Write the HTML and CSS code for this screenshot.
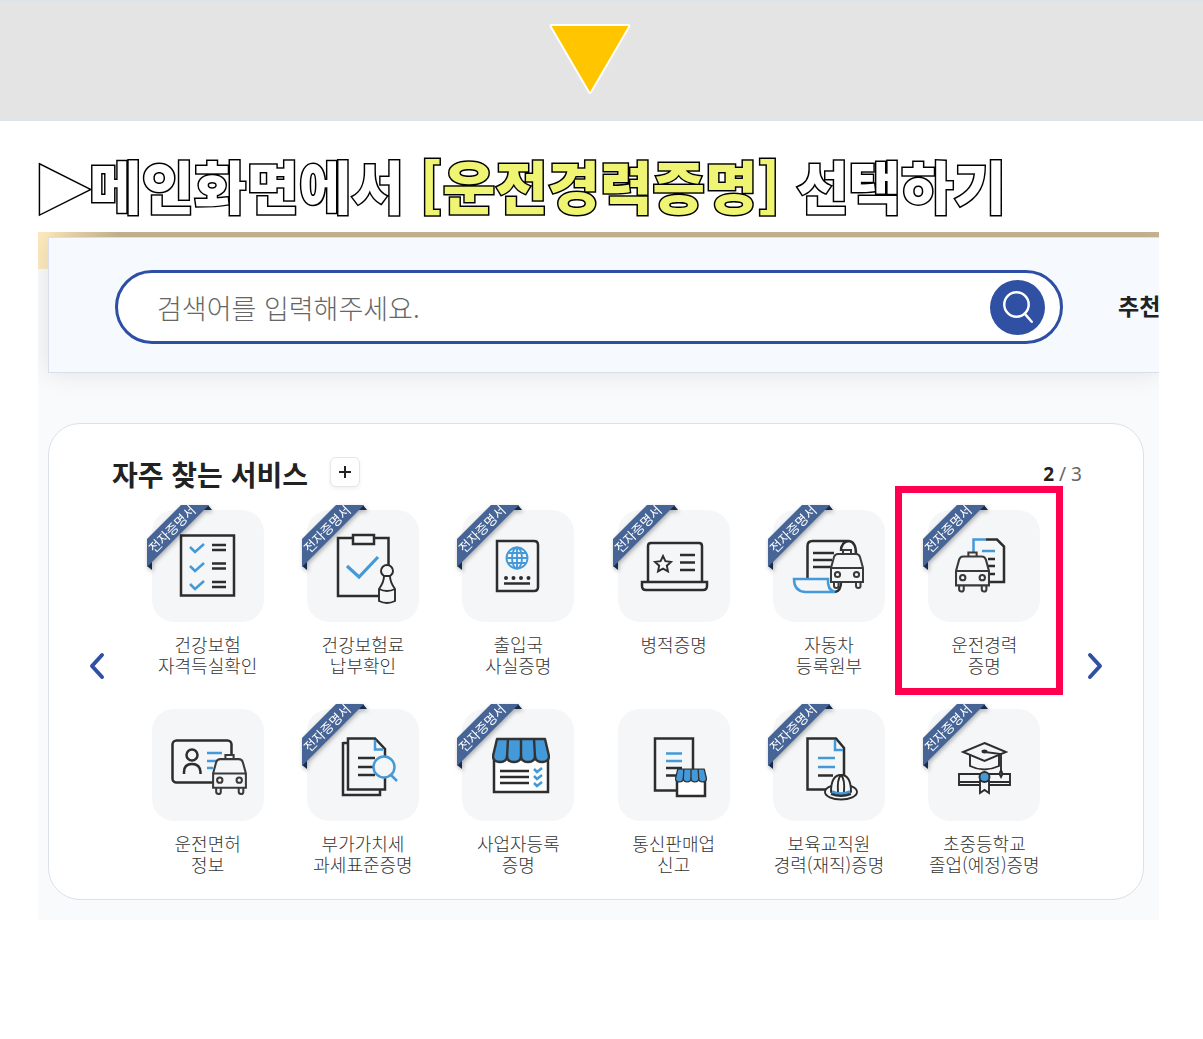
FILE: index.html
```html
<!DOCTYPE html>
<html lang="ko">
<head>
  <meta charset="UTF-8" />
  <meta name="viewport" content="width=device-width, initial-scale=1.0"/>
  <title>운전경력증명 선택하기</title>
  <link rel="stylesheet" href="styles.css">
</head>
<body>
  <!-- shared shapes -->
  <svg class="defs" aria-hidden="true">
    <symbol id="ribbon" viewBox="0 0 65 65">
      <path d="M58 0h3l4 5h-8zM0 58v3l5 4v-8z" fill="#172b4d"/>
      <path d="M34 0h28L0 62V34z" fill="#466596"/>
      <text class="ribbon-text" x="25" y="29" transform="rotate(-45 25 24)">전자증명서</text>
    </symbol>
    <symbol id="van" viewBox="0 0 34 40">
      <g fill="#f4f6f8" stroke="#3a3a3a" stroke-width="2">
        <path d="M4 32h4.500v5q0 2-2.200 2t-2.300-2zM26 32h4.500v5q0 2-2.200 2t-2.300-2z"/>
        <path d="M13 5V1h8v4"/>
        <path d="M1 33V19L4 8q1-3 4-3h18q3 0 4 3l3 11v14z"/>
        <path d="M1 19h32"/>
        <circle cx="7.500" cy="25.500" r="2.600"/>
        <circle cx="26.500" cy="25.500" r="2.600"/>
      </g>
    </symbol>
    <symbol id="awning" viewBox="0 0 58 27">
      <path d="M5 2h48l4 17q0 6-7 6t-7-6q0 6-7 6t-7-6q0 6-7 6t-7-6q0 6-7 6t-7-6z" fill="#4499d9" stroke="#333" stroke-width="2.400" stroke-linejoin="round"/>
      <path d="M16 2l-1 18M29 2v18M42 2l1 18" stroke="#333" stroke-width="2.400"/>
    </symbol>
  </svg>

  <div class="top-band">
    <svg class="down-arrow" viewBox="0 0 84 74" aria-hidden="true">
      <path d="M3 3h78L42 70z" fill="#ffc600" stroke="#fff" stroke-width="4" stroke-linejoin="round" paint-order="stroke"/>
    </svg>
  </div>

  <h1 class="step-title"><span class="marker">▶</span>메인화면에서 <em>[운전경력증명]</em> 선택하기</h1>

  <main class="portal">
    <div class="search-panel">
      <form class="search-box">
        <input type="search" class="search-input" placeholder="검색어를 입력해주세요." aria-label="검색어">
        <button type="button" class="search-btn" aria-label="검색">
          <svg viewBox="0 0 54 54" fill="none" stroke="#fff" stroke-width="2.400" stroke-linecap="round">
            <circle cx="26" cy="24" r="12"/>
            <path d="M34 33l7 8"/>
          </svg>
        </button>
      </form>
      <strong class="recommend">추천</strong>
    </div>

    <section class="services">
      <div class="services-head">
        <h2>자주 찾는 서비스</h2>
        <button type="button" class="plus-btn" aria-label="더보기">
          <svg viewBox="0 0 28 28"><path d="M14 8v12M8 14h12" stroke="#222" stroke-width="2"/></svg>
        </button>
        <p class="page-count"><b>2</b> / 3</p>
      </div>

      <div class="slider">
        <button type="button" class="arrow" aria-label="이전">
          <svg viewBox="0 0 16 28"><path d="M13 3L3 14l10 11"/></svg>
        </button>

        <ul class="service-list">
          <li>
            <a href="#" class="service">
              <span class="tile">
                <svg class="icon" viewBox="0 0 112 112">
                  <path d="M29 25.500h53v60H29z"/>
                  <path class="blue" d="M38 37l5 5 9-8M38 56l5 5 9-8M38 74l5 5 9-8"/>
                  <path d="M60 35h14M60 40h14M60 53.500h14M60 58.500h14M60 72h14M60 77h14"/>
                </svg>
                <svg class="ribbon"><use href="#ribbon"/></svg>
              </span>
              <span class="label">건강보험<br>자격득실확인</span>
            </a>
          </li>
          <li>
            <a href="#" class="service">
              <span class="tile">
                <svg class="icon" viewBox="0 0 112 112">
                  <path d="M31 28h50.500v58H31z"/>
                  <path class="fill" d="M46 25h21v9H46z"/>
                  <path class="blue thick" d="M40 56l12 11 19-20"/>
                  <path class="fill thin" d="M77 66q-3-2-3-5a6 6 0 0 1 12 0q0 3-3 5 0 6 5 13v12q-8 4-16 0V79q5-7 5-13z"/>
                  <path class="thin" d="M72 79q8 4 16 0M77 66h6"/>
                </svg>
                <svg class="ribbon"><use href="#ribbon"/></svg>
              </span>
              <span class="label">건강보험료<br>납부확인</span>
            </a>
          </li>
          <li>
            <a href="#" class="service">
              <span class="tile">
                <svg class="icon" viewBox="0 0 112 112">
                  <path d="M35 31h37q4 0 4 4v42q0 4-4 4H35z"/>
                  <g class="blue thin">
                    <circle cx="55" cy="48" r="10.500"/>
                    <ellipse cx="55" cy="48" rx="5" ry="10.500"/>
                    <path d="M55 37v22M44 48h22M46 43h18M46 53h18"/>
                  </g>
                  <path class="dots" d="M44 68h0M51.500 68h0M59 68h0M66.500 68h0"/>
                  <path d="M42 73.500h26"/>
                </svg>
                <svg class="ribbon"><use href="#ribbon"/></svg>
              </span>
              <span class="label">출입국<br>사실증명</span>
            </a>
          </li>
          <li>
            <a href="#" class="service">
              <span class="tile">
                <svg class="icon" viewBox="0 0 112 112">
                  <path d="M30 72V36q0-3 3-3h48q3 0 3 3v36"/>
                  <path d="M24 72h65v4q0 4-4 4H28q-4 0-4-4z"/>
                  <path class="thin" d="M45 46l2.400 5.200 5.600.700-4.200 3.800 1.200 5.700-5-2.800-5 2.800 1.200-5.700-4.200-3.800 5.600-.700z"/>
                  <path d="M62 45h15M62 52.500h15M62 60h15"/>
                </svg>
                <svg class="ribbon"><use href="#ribbon"/></svg>
              </span>
              <span class="label">병적증명</span>
            </a>
          </li>
          <li>
            <a href="#" class="service">
              <span class="tile">
                <svg class="icon" viewBox="0 0 112 112">
                  <path d="M34.500 69V36q0-5 5-5H76q-8 1-8 10M76 31q7 1 7 13"/>
                  <path d="M40 43h21M40 50h19M40 57h18"/>
                  <path d="M68 72q0 9-6 10"/>
                  <path class="blue" d="M62 82H32q-11-1-11-13h34q-1 11 7 13z"/>
                  <use href="#van" x="57" y="39" width="34" height="40"/>
                </svg>
                <svg class="ribbon"><use href="#ribbon"/></svg>
              </span>
              <span class="label">자동차<br>등록원부</span>
            </a>
          </li>
          <li>
            <a href="#" class="service selected">
              <span class="tile">
                <svg class="icon" viewBox="0 0 112 112">
                  <path class="blue" d="M45.500 42V29.500H58M54 41h13"/>
                  <path d="M58 29.500h11l7 7V72H60M60 49h7M60 56h7M60 64h7"/>
                  <use href="#van" x="27" y="41" width="35" height="42"/>
                </svg>
                <svg class="ribbon"><use href="#ribbon"/></svg>
              </span>
              <span class="label">운전경력<br>증명</span>
            </a>
          </li>
          <li>
            <a href="#" class="service">
              <span class="tile">
                <svg class="icon" viewBox="0 0 112 112">
                  <rect x="20.500" y="31.500" width="59" height="42" rx="4"/>
                  <circle cx="40" cy="46" r="5.500"/>
                  <path d="M32 65v-2q0-8 8-8t8.500 8v2"/>
                  <path class="blue" d="M55 44h15M55 52h9M55 59h6"/>
                  <use href="#van" x="60" y="45" width="35" height="41"/>
                </svg>
              </span>
              <span class="label">운전면허<br>정보</span>
            </a>
          </li>
          <li>
            <a href="#" class="service">
              <span class="tile">
                <svg class="icon" viewBox="0 0 112 112">
                  <path d="M36 34h5M36 33v53h37v-5"/>
                  <path d="M68 29.500H41V80.500h37V40z"/>
                  <path class="blue" d="M68 31v9.500h8"/>
                  <path d="M51 49h17M51 58h15M51 66h17"/>
                  <circle class="blue fill" cx="77" cy="58" r="10.500"/>
                  <path class="blue" d="M84 66l6 6"/>
                </svg>
                <svg class="ribbon"><use href="#ribbon"/></svg>
              </span>
              <span class="label">부가가치세<br>과세표준증명</span>
            </a>
          </li>
          <li>
            <a href="#" class="service">
              <span class="tile">
                <svg class="icon" viewBox="0 0 112 112">
                  <path class="white" d="M32 48h54v35H32z"/>
                  <use href="#awning" x="30" y="28" width="58" height="27"/>
                  <path d="M38 62h29M38 68h29M38 74h29"/>
                  <path class="blue" d="M72 60l3 3 5-4M72 67l3 3 5-4M72 74l3 3 5-4"/>
                </svg>
                <svg class="ribbon"><use href="#ribbon"/></svg>
              </span>
              <span class="label">사업자등록<br>증명</span>
            </a>
          </li>
          <li>
            <a href="#" class="service">
              <span class="tile">
                <svg class="icon" viewBox="0 0 112 112">
                  <path d="M37 29.500h38v52H37z"/>
                  <path class="blue" d="M48 44.500h16M48 52h16"/>
                  <path d="M48 59h16M48 66.500h12"/>
                  <path class="white" d="M59 68h28v19H59z"/>
                  <use href="#awning" x="57" y="59" width="32" height="15"/>
                </svg>
              </span>
              <span class="label">통신판매업<br>신고</span>
            </a>
          </li>
          <li>
            <a href="#" class="service">
              <span class="tile">
                <svg class="icon" viewBox="0 0 112 112">
                  <path d="M71 66V39l-8-9.500H34.500V80.500H55"/>
                  <path class="blue" d="M62 31v10h8M45 49h17M45 58h17"/>
                  <path d="M45 66.500h15"/>
                  <ellipse class="fill thin" cx="68" cy="83" rx="16" ry="7.500"/>
                  <path class="fill thin" d="M58 83q0-17 10-17t10 17q-10 5-20 0z"/>
                  <path class="thin" d="M65 83q-1-13 3-17M71 83q1-13-3-17M66 66h4"/>
                  <path class="blue" d="M59 82.500q9 4 18 0"/>
                  <path class="thin" d="M58 85q10 4 20 0"/>
                </svg>
                <svg class="ribbon"><use href="#ribbon"/></svg>
              </span>
              <span class="label">보육교직원<br>경력(재직)증명</span>
            </a>
          </li>
          <li>
            <a href="#" class="service">
              <span class="tile">
                <svg class="icon" viewBox="0 0 112 112">
                  <g class="thin">
                    <path d="M42 46v11q14 7 29 0V46"/>
                    <path class="fill" d="M56.500 34L78 43l-21.500 9L35 43z"/>
                    <ellipse cx="56.500" cy="42.500" rx="2" ry="1" fill="#333"/>
                    <path d="M57 43l16 2v18"/>
                    <path class="fill" d="M31 65h51v11H31zM31 73h51"/>
                    <path class="fill" d="M52 72h9v12l-4.500-3-4.500 3z"/>
                    <circle cx="56.500" cy="68" r="5" fill="#4499d9"/>
                    <path d="M73 61l1.500 4-1.500 3-1.500-3z" fill="#4499d9"/>
                  </g>
                </svg>
                <svg class="ribbon"><use href="#ribbon"/></svg>
              </span>
              <span class="label">초중등학교<br>졸업(예정)증명</span>
            </a>
          </li>
        </ul>

        <button type="button" class="arrow" aria-label="다음">
          <svg viewBox="0 0 16 28"><path d="M3 3l10 11L3 25"/></svg>
        </button>
      </div>
    </section>
  </main>
</body>
</html>
```
FILE: styles.css
```css
* {
  box-sizing: border-box;
}

body {
  font-family: "Noto Sans CJK KR", "Noto Sans", sans-serif;
  background: #fff;
  color: #222;
  margin: 0;
}

button {
  border: 0;
  padding: 0;
  background: none;
  cursor: pointer;
}

svg {
  display: block;
}

.defs {
  position: absolute;
  width: 0;
  height: 0;
}

/* top */
.top-band {
  display: flex;
  justify-content: center;
  padding: 21px 23px 24px 0;
  background: #e4e4e4;
  border-top: 2px solid #dde3ea;
  border-bottom: 1px solid #dde3ea;
}

.down-arrow {
  width: 84px;
  height: 73px;
}

.step-title {
  display: flex;
  align-items: center;
  margin: 0;
  padding: 23px 40px 8px;
  font-size: 57px;
  font-weight: 900;
  line-height: 80px;
  white-space: pre;
  color: #fff;
  -webkit-text-stroke: 3px #000;
  paint-order: stroke fill;
}

.step-title em {
  font-style: normal;
  color: #eff573;
}

.marker {
  font-family: "DejaVu Sans", sans-serif;
  font-size: 64px;
  font-weight: 400;
}

/* portal */
.portal {
  margin: 0 44px 40px 38px;
  padding: 5px 0 20px 10px;
  background: linear-gradient(to right, #fde9bd 10px, #c8b793 80px) no-repeat 0 0 / 100% 37px, #f9fafc;
  overflow: hidden;
}

.search-panel {
  display: flex;
  align-items: center;
  gap: 55px;
  padding: 32px 0 28px 66px;
  background: #f6faff;
  border: 1px solid #d8deea;
  border-right: 0;
  box-shadow: 0 0 24px rgba(0, 0, 0, 0.1);
  white-space: nowrap;
  margin-bottom: 50px;
}

.search-box {
  flex: 1;
  display: flex;
  align-items: center;
  height: 74px;
  padding: 0 15px 0 39px;
  background: #fff;
  border: 3px solid #2d4fa3;
  border-radius: 37px;
}

.search-input {
  flex: 1;
  min-width: 0;
  padding: 0;
  border: 0;
  outline: 0;
  background: none;
  font-family: inherit;
  font-size: 27px;
  font-weight: 300;
}

.search-input::placeholder {
  color: #666;
}

.search-btn {
  width: 55px;
  height: 55px;
  border-radius: 50%;
  background: #2f50a3;
}

.recommend {
  width: 41px;
  padding-bottom: 4px;
  font-size: 23px;
  font-weight: 700;
  line-height: 36px;
}

/* services */
.services {
  margin-right: 15px;
  padding: 31px 40px 24px;
  background: #fff;
  border: 1px solid #dce0ea;
  border-radius: 32px;
}

.services-head {
  display: flex;
  align-items: center;
  padding: 0 21px 0 23px;
}

.services-head h2 {
  margin: 0 22px 0 0;
  font-size: 28px;
  font-weight: 700;
  line-height: 38px;
}

.plus-btn {
  width: 30px;
  height: 30px;
  margin-bottom: 4px;
  background: #fff;
  border: 1px solid #e4e6ea;
  border-radius: 6px;
  box-shadow: 0 2px 4px rgba(0, 0, 0, 0.06);
}

.page-count {
  margin: 0 0 0 auto;
  font-family: "Noto Sans", sans-serif;
  font-size: 19px;
  line-height: 38px;
  color: #666;
}

.page-count b {
  color: #222;
}

.slider {
  display: flex;
  align-items: center;
  gap: 25px;
  padding-top: 17px;
}

.arrow {
  width: 16px;
  flex: none;
  margin-bottom: 54px;
}

.arrow svg {
  fill: none;
  stroke: #2f50a3;
  stroke-width: 4;
  stroke-linecap: round;
  stroke-linejoin: round;
}

.service-list {
  flex: 1;
  display: grid;
  grid-template-columns: repeat(6, 1fr);
  row-gap: 33px;
  margin: 0;
  padding: 0;
  list-style: none;
}

.service {
  position: relative;
  display: flex;
  flex-direction: column;
  align-items: center;
  gap: 12px;
  color: #333;
  text-decoration: none;
}

.tile {
  position: relative;
  width: 112px;
  height: 112px;
  background: #f4f6f8;
  border-radius: 22px;
}

.label {
  height: 42px;
  font-size: 18px;
  font-weight: 300;
  line-height: 21px;
  text-align: center;
  white-space: nowrap;
}

.selected::after {
  content: "";
  position: absolute;
  top: -24px;
  right: -1px;
  bottom: -19px;
  left: -12px;
  border: 7px solid #ff0051;
}

.ribbon {
  position: absolute;
  top: -5px;
  left: -5px;
  width: 65px;
  height: 65px;
  filter: drop-shadow(1px 2px 2px rgba(0, 0, 0, 0.3));
}

.ribbon-text {
  font-size: 13px;
  fill: #fff;
  text-anchor: middle;
}

/* icons */
.icon {
  fill: none;
  stroke: #2d2d2d;
  stroke-width: 2.5;
}

.icon .blue {
  stroke: #4499d9;
}

.icon .thin {
  stroke-width: 1.9;
}

.icon .thick {
  stroke-width: 3.2;
}

.icon .fill {
  fill: #f4f6f8;
}

.icon .white {
  fill: #fff;
}

.icon .dots {
  stroke-width: 4;
  stroke-linecap: round;
}
```
